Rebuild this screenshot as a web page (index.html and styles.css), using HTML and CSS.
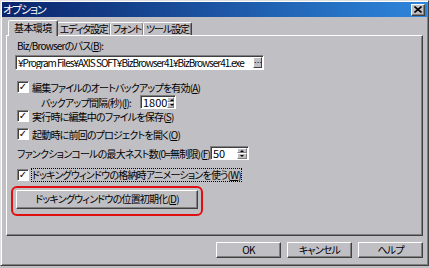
FILE: index.html
```html
<!DOCTYPE html>
<html lang="ja">
<head>
    <meta charset="UTF-8">
    <title>オプション</title>
    <link rel="stylesheet" href="styles.css">
</head>
<body>

    <div class="dialog">
        <div class="titlebar">
            <span class="title">オプション</span>
            <span class="close">
                <svg width="8" height="7" viewBox="0 0 8 7"><path d="M0.5 0.5 L7.5 6.5 M7.5 0.5 L0.5 6.5" stroke="#000" stroke-width="1.6"/></svg>
            </span>
        </div>

        <div class="main">
            <div class="tabs">
                <div class="tab active">基本環境</div>
                <div class="tab">エディタ設定</div>
                <div class="tab">フォント</div>
                <div class="tab">ツール設定</div>
            </div>

            <div class="panel">
                <div class="label">Biz/Browserのパス(<u>B</u>):</div>
                <div class="path">
                    <span class="path-text">¥Program Files¥AXIS SOFT¥BizBrowser41¥BizBrowser41.exe</span>
                    <span class="browse">…</span>
                </div>

                <div class="check-row first">
                    <span class="check">✓</span>
                    <span>編集ファイルのオートバックアップを有効(<u>A</u>)</span>
                </div>

                <div class="spin-row interval">
                    <span class="spin-label">バックアップ間隔(秒)(<u>I</u>):</span>
                    <span class="spin">
                        <span class="spin-value">1800</span>
                        <span class="spin-arrows"><span class="arrow up"></span><span class="arrow down"></span></span>
                    </span>
                </div>

                <div class="check-row save">
                    <span class="check">✓</span>
                    <span>実行時に編集中のファイルを保存(<u>S</u>)</span>
                </div>

                <div class="check-row open">
                    <span class="check">✓</span>
                    <span>起動時に前回のプロジェクトを開く(<u>O</u>)</span>
                </div>

                <div class="spin-row nest">
                    <span class="spin-label">ファンクションコールの最大ネスト数(0=無制限)(<u>F</u>):</span>
                    <span class="spin small">
                        <span class="spin-value">50</span>
                        <span class="spin-arrows"><span class="arrow up"></span><span class="arrow down"></span></span>
                    </span>
                </div>

                <div class="check-row focus-row">
                    <span class="check">✓</span>
                    <span class="focus">ドッキングウィンドウの格納時アニメーションを使う(<u>W</u>)</span>
                </div>

                <div class="highlight">
                    <div class="button wide">ドッキングウィンドウの位置初期化(<u>D</u>)</div>
                </div>
            </div>

            <div class="buttons">
                <div class="button">OK</div>
                <div class="button">キャンセル</div>
                <div class="button">ヘルプ</div>
            </div>
        </div>
    </div>

</body>
</html>
```

FILE: styles.css
```css
body {
    margin: 0;
    background-color: #c0bfc4;
    font-family: "Noto Sans CJK JP", sans-serif;
    font-size: 10px;
    letter-spacing: -0.8px;
    font-feature-settings: "palt";
    color: #000;
}

u {
    text-decoration-thickness: 1px;
    text-underline-offset: 1px;
}

.dialog {
    box-sizing: border-box;
    width: 429px;
    height: 266px;
    padding: 1px;
    border: 1px solid;
    border-color: #dfdfdf #404040 #404040 #dfdfdf;
    box-shadow: inset 1px 1px #fff, inset -1px -1px #808080;
    background-color: #c0bfc4;
}

.titlebar {
    display: flex;
    align-items: center;
    justify-content: space-between;
    height: 15px;
    padding: 0 2px 0 1px;
    background: linear-gradient(to right, #0a246a, #2e86dc);
}

.title {
    color: #fff;
    line-height: 15px;
    font-size: 11px;
    letter-spacing: -1.2px;
}

.close {
    display: flex;
    align-items: center;
    justify-content: center;
    box-sizing: border-box;
    width: 14px;
    height: 12px;
    background-color: #c0bfc4;
    border: 1px solid;
    border-color: #fff #404040 #404040 #fff;
    box-shadow: inset -1px -1px #808080;
}

.main {
    padding: 3px 4px 0 4px;
}

.tabs {
    display: flex;
    align-items: flex-end;
    height: 15px;
    padding-left: 2px;
}

.tab {
    box-sizing: border-box;
    height: 13px;
    padding: 0 2px;
    line-height: 12px;
    letter-spacing: -1.1px;
    border: 1px solid;
    border-bottom: none;
    border-color: #fff #404040 transparent #fff;
    box-shadow: inset -1px 0 #808080;
    border-radius: 2px 2px 0 0;
    margin-left: -1px;
}

.tab.active {
    height: 16px;
    margin-bottom: -1px;
    margin-left: 0;
    padding: 0 5px;
    line-height: 14px;
    letter-spacing: -0.6px;
    background-color: #c0bfc4;
    position: relative;
}

.panel {
    box-sizing: border-box;
    height: 201px;
    padding: 2px 9px 0 10px;
    border: 1px solid;
    border-color: #fff #404040 #404040 #fff;
    box-shadow: inset -1px -1px #808080;
}

.label {
    height: 16px;
    line-height: 16px;
}

.path {
    display: flex;
    align-items: center;
    box-sizing: border-box;
    width: 249px;
    height: 15px;
    margin-left: -2px;
    margin-top: 1px;
    border: 1px solid;
    border-color: #808080 #fff #fff #808080;
    box-shadow: inset 1px 1px #404040;
    background-color: #fff;
    overflow: hidden;
}

.path-text {
    flex: 1;
    padding-left: 2px;
    white-space: nowrap;
    overflow: hidden;
    line-height: 13px;
    letter-spacing: -1px;
}

.browse {
    box-sizing: border-box;
    width: 9px;
    height: 11px;
    margin-right: 1px;
    font-size: 8px;
    line-height: 9px;
    text-align: center;
    background-color: #c0bfc4;
    border: 1px solid;
    border-color: #fff #404040 #404040 #fff;
}

.check-row {
    display: flex;
    align-items: center;
    gap: 3px;
    height: 14px;
    margin-top: 3px;
    white-space: nowrap;
}

.check-row.first {
    margin-top: 10px;
}

.check-row.save {
    margin-top: 0;
}

.check-row.open {
    margin-top: 4px;
}

.check {
    box-sizing: border-box;
    width: 12px;
    height: 12px;
    font-size: 10px;
    line-height: 10px;
    font-weight: bold;
    letter-spacing: 0;
    text-align: center;
    background-color: #fff;
    border: 1px solid;
    border-color: #808080 #fff #fff #808080;
    box-shadow: inset 1px 1px #404040;
    font-family: "DejaVu Sans", sans-serif;
}

.spin-row {
    display: flex;
    align-items: center;
    height: 14px;
    white-space: nowrap;
}

.spin-row.interval {
    margin-top: 1px;
    padding-left: 24px;
}

.interval .spin-label {
    width: 99px;
}

.spin-row.nest {
    margin-top: 5px;
}

.nest .spin-label {
    width: 193px;
}

.spin {
    display: flex;
    align-items: center;
    box-sizing: border-box;
    width: 36px;
    height: 14px;
    border: 1px solid;
    border-color: #808080 #fff #fff #808080;
    box-shadow: inset 1px 1px #404040;
    background-color: #fff;
    letter-spacing: 0;
}

.spin.small {
    width: 39px;
}

.spin-value {
    flex: 1;
    padding-left: 2px;
    line-height: 12px;
    font-size: 11px;
}

.spin-arrows {
    display: flex;
    flex-direction: column;
    width: 10px;
    height: 11px;
    margin: 0 1px 0 0;
}

.arrow {
    position: relative;
    flex: 1;
    box-sizing: border-box;
    background-color: #c0bfc4;
    border: 1px solid;
    border-color: #fff #808080 #808080 #fff;
}

.arrow::after {
    content: "";
    position: absolute;
    left: 2px;
    top: 1px;
    border-left: 2px solid transparent;
    border-right: 2px solid transparent;
}

.arrow.up::after {
    border-bottom: 2px solid #000;
}

.arrow.down::after {
    border-top: 2px solid #000;
}

.focus-row {
    margin-top: 8px;
}

.focus {
    outline: 1px dotted #000;
    line-height: 12px;
}

.highlight {
    box-sizing: border-box;
    width: 192px;
    height: 30px;
    margin: 4px 0 0 -6px;
    padding: 2px 3px;
    border: 2px solid #e01010;
    border-radius: 6px;
}

.button {
    box-sizing: border-box;
    height: 16px;
    line-height: 14px;
    text-align: center;
    background-color: #c0bfc4;
    border: 1px solid;
    border-color: #fff #404040 #404040 #fff;
    box-shadow: inset -1px -1px #808080;
}

.button.wide {
    height: 19px;
    line-height: 16px;
}

.buttons {
    display: flex;
    justify-content: flex-end;
    gap: 6px;
    margin-top: 6px;
}

.buttons .button {
    width: 65px;
}
```
